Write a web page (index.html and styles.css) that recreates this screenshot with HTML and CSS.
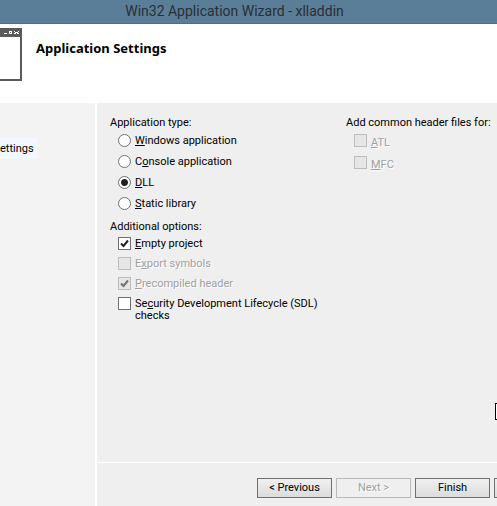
FILE: index.html
```html
<!DOCTYPE html>
<html lang="en">
<head>
<meta charset="utf-8">
<title>Win32 Application Wizard - xlladdin</title>
<link rel="stylesheet" href="styles.css">
</head>
<body>
<div class="window">
  <header class="titlebar">Win32 Application Wizard - xlladdin</header>
  <div class="banner">
    <svg class="banner-icon" width="22" height="53" viewBox="0 0 22 53" shape-rendering="crispEdges" aria-hidden="true">
      <path fill="#5a5a5a" d="M0 0h22v53H0v-2h20V9H0z"/>
      <path fill="#fff" d="M4 5h3v1H4zM9 3h3v3H9zM14 3h1v1h-1zM18 3h1v1h-1zM15 4h3v1h-3zM14 5h2v1h-2zM17 5h2v1h-2z"/>
      <path fill="#5a5a5a" d="M10 4h1v1h-1z"/>
    </svg>
    <h1>Application Settings</h1>
  </div>
  <div class="body">
    <nav class="sidebar"><a class="step" href="#settings">ettings</a></nav>
    <form class="panel">
      <div class="settings">
        <div>
          <fieldset class="radios">
            <legend>Application type:</legend>
            <label><input type="radio" name="type"><span><u>W</u>indows application</span></label>
            <label><input type="radio" name="type"><span>C<u>o</u>nsole application</span></label>
            <label><input type="radio" name="type" checked><span><u>D</u>LL</span></label>
            <label><input type="radio" name="type"><span><u>S</u>tatic library</span></label>
          </fieldset>
          <fieldset class="checks">
            <legend>Additional options:</legend>
            <label><input type="checkbox" checked><span><u>E</u>mpty project</span></label>
            <label class="off"><input type="checkbox" disabled><span>E<u>x</u>port symbols</span></label>
            <label class="off"><input type="checkbox" checked disabled><span><u>P</u>recompiled header</span></label>
            <label><input type="checkbox"><span>Se<u>c</u>urity Development Lifecycle (SDL) checks</span></label>
          </fieldset>
        </div>
        <fieldset class="headers">
          <legend>Add common header files for:</legend>
          <label class="off"><input type="checkbox" disabled><span><u>A</u>TL</span></label>
          <label class="off"><input type="checkbox" disabled><span><u>M</u>FC</span></label>
        </fieldset>
        <div class="edge-box"></div>
      </div>
      <footer class="actions">
        <button type="button">&lt; Previous</button>
        <button type="button" disabled>Next &gt;</button>
        <button type="button">Finish</button>
        <button type="button" class="cut" aria-label="Cancel"></button>
      </footer>
    </form>
  </div>
</div>
</body>
</html>
```
FILE: styles.css
```css
* { box-sizing: border-box; }
body {
  margin: 0;
  font: 11px/12px Tahoma, Roboto, sans-serif;
  color: #000;
}
.window {
  min-height: 100vh;
  display: flex;
  flex-direction: column;
  overflow: hidden;
  background: #fff;
}
.titlebar {
  height: 24px;
  padding-right: 28px;
  border-bottom: 1px solid #4b6e8c;
  background: #5b7e98;
  color: #292e33;
  font: 14px/22px "Segoe UI", Roboto, sans-serif;
  text-align: center;
}
.banner {
  height: 79px;
  padding-top: 4px;
  display: flex;
  gap: 14px;
}
h1 {
  margin: 12px 0 0;
  font: bold 13px/16px Tahoma, "Noto Sans", sans-serif;
}
.body { flex: 1; display: flex; }
.sidebar {
  width: 97px;
  flex: none;
  padding-top: 35px;
  border-right: 2px solid #fff;
  background: #f3f3f3;
}
.step {
  display: block;
  width: 37px;
  padding-right: 4px;
  background: #f3f8ff;
  color: #000;
  line-height: 21px;
  text-align: right;
  text-decoration: none;
}
.panel {
  flex: 1;
  min-width: 0;
  display: flex;
  flex-direction: column;
  background: #efefef;
}
.settings {
  position: relative;
  flex: 1;
  display: grid;
  grid-template-columns: 236px 1fr;
  padding: 12px 0 0 13px;
}
fieldset { margin: 0; padding: 0; border: 0; min-width: 0; }
legend { padding: 0; line-height: 15px; white-space: nowrap; }
label { display: flex; align-items: flex-start; gap: 4px; padding-left: 8px; }
label span { padding-top: 1px; }
u { text-underline-offset: 1px; text-decoration-thickness: 1px; text-decoration-skip-ink: none; }
.radios label { height: 21px; padding-top: 4px; }
.checks { margin-top: 5px; }
.checks label { min-height: 20px; padding: 3px 20px 0 8px; }
.headers label { height: 22px; padding-top: 4px; }
.headers span { padding-top: 3px; }
input {
  appearance: none;
  flex: none;
  width: 13px;
  height: 13px;
  margin: 0;
  border: 1px solid #707070;
  background: #fff;
}
input[type="radio"] { border-radius: 50%; }
input[type="radio"]:checked { background: radial-gradient(circle, #222 0 3px, #fff 4px); }
input[type="checkbox"]:checked {
  background: #fff url("data:image/svg+xml,%3Csvg xmlns='http://www.w3.org/2000/svg' viewBox='0 0 11 11'%3E%3Cpath d='M2 5.5 4.5 8 9 2.5' fill='none' stroke='%23222' stroke-width='2'/%3E%3C/svg%3E");
}
input[type="checkbox"]:disabled { border-color: #bcbcbc; background-color: #e6e6e6; }
input[type="checkbox"]:checked:disabled {
  background-image: url("data:image/svg+xml,%3Csvg xmlns='http://www.w3.org/2000/svg' viewBox='0 0 11 11'%3E%3Cpath d='M2 5.5 4.5 8 9 2.5' fill='none' stroke='%23707070' stroke-width='2'/%3E%3C/svg%3E");
}
.off { color: #a0a0a0; text-shadow: 1px 1px #fff; }
.edge-box {
  position: absolute;
  right: 0;
  bottom: 42px;
  width: 2px;
  height: 17px;
  border: 1px solid #000;
  border-right: 0;
  background: #fff;
}
.actions {
  height: 44px;
  padding-top: 15px;
  border-top: 1px solid #fff;
  display: flex;
  justify-content: flex-end;
  gap: 4px;
}
button {
  flex: none;
  width: 75px;
  height: 20px;
  padding: 0;
  border: 1px solid #707070;
  background: linear-gradient(#f0f0f0, #dcdcdc);
  color: #000;
  font: inherit;
}
button:disabled {
  border-color: #b8b8b8;
  background: #efefef;
  color: #a0a0a0;
  text-shadow: 1px 1px #fff;
}
.cut { margin-right: -72px; }
```
